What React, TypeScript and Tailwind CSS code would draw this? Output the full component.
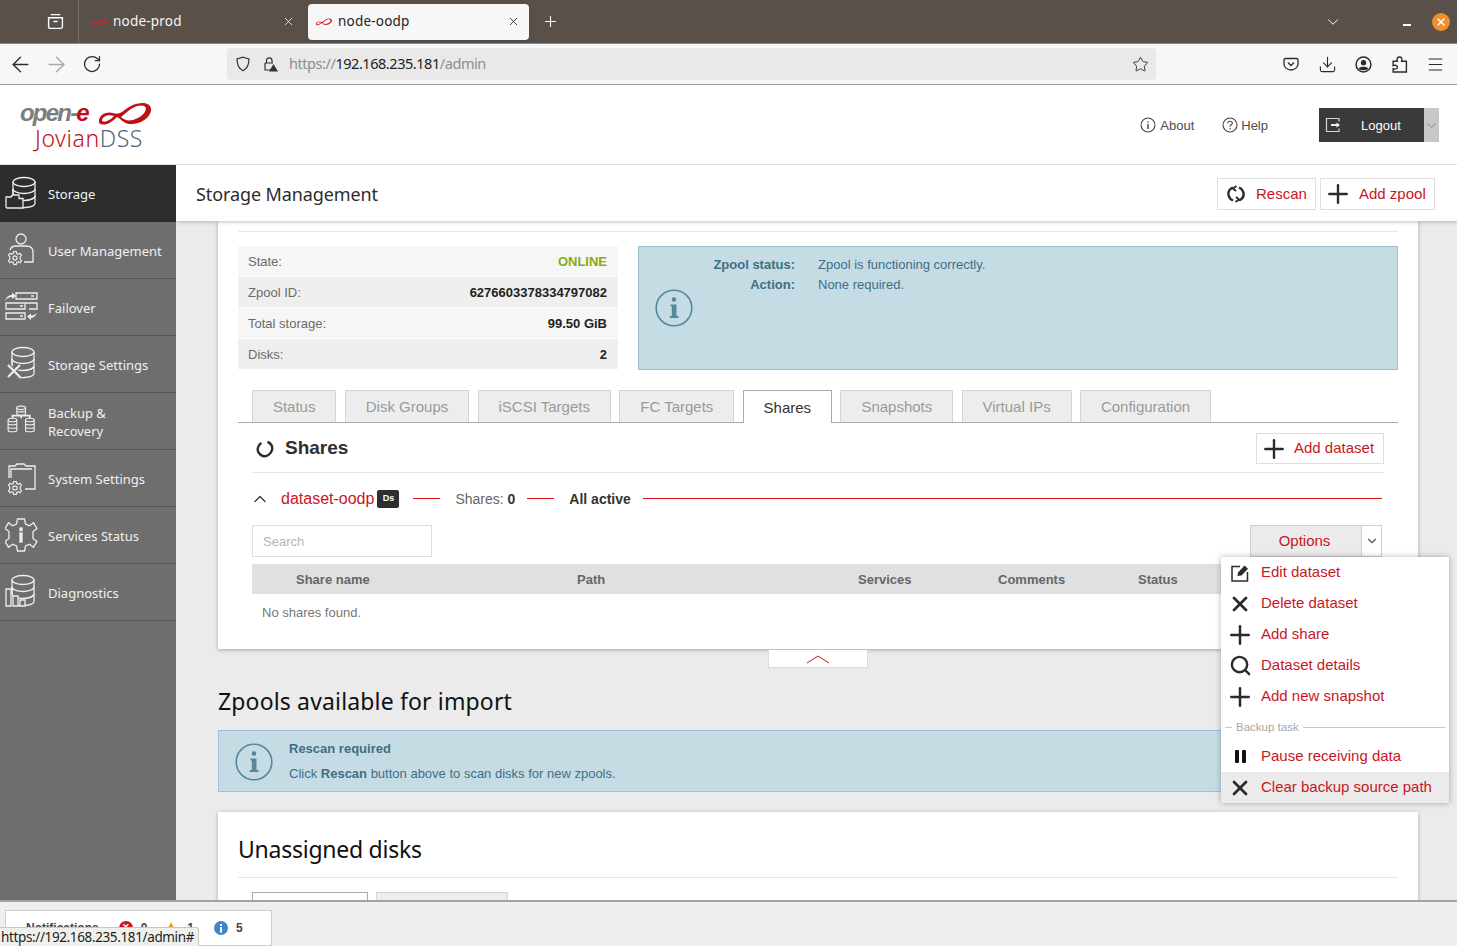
import type { ReactNode } from "react";
import {
  ArrowLeft,
  ArrowRight,
  ChevronDown,
  ChevronUp,
  Download,
  Menu,
  Plus,
  RotateCw,
  Search,
  Star,
  X,
} from "lucide-react";

const RED = "text-[#c9161f]";
const UI = "font-['Noto_Sans',sans-serif]";

function Swoosh({ className }: { className: string }) {
  return (
    <svg viewBox="0 0 52 22" className={className}>
      <path
        fillRule="evenodd"
        fill="currentColor"
        d="M0 17C1 11 8 8 14 10C20 12 23 9 27 6C32 2 38 0 43 0C49 0 53 3 52 8C50 16 40 22 30 21C24 20 22 16 18 14C14 18 10 21 6 21.500C2 22 -1 21 0 17ZM3 17C3 19 6 19 8 18C11 17 13 15 15 13C10 11 4 13 3 17ZM22 14C25 17 29 18 34 17C41 15 47 10 47 5C46 2 42 2 38 3C32 5 27 10 22 14Z"
      />
    </svg>
  );
}

function InfoCircle({ className }: { className: string }) {
  return (
    <svg viewBox="0 0 38 38" className={className} fill="none">
      <circle cx="19" cy="19" r="17.800" stroke="currentColor" strokeWidth="1.600" />
      <circle cx="19" cy="10.500" r="2.300" fill="currentColor" />
      <path
        fill="currentColor"
        d="M15.500 15.500H21.500V27H23.500V29H14.800V27H16.800V17.500H15.500Z"
      />
    </svg>
  );
}

function Gear({ x, y, s = 1 }: { x: number; y: number; s?: number }) {
  return (
    <g transform={`translate(${x} ${y}) scale(${s})`}>
      <path d="M-1.500 -7H1.500L2 -5L3.800 -4.200L5.600 -5.300L7.300 -3L5.800 -1.500V1.500L7.300 3L5.600 5.300L3.800 4.200L2 5L1.500 7H-1.500L-2 5L-3.800 4.200L-5.600 5.300L-7.300 3L-5.800 1.500V-1.500L-7.300 -3L-5.600 -5.300L-3.800 -4.200L-2 -5Z" />
      <circle r="2.400" />
    </g>
  );
}

function DbBody({ x = 0 }: { x?: number }) {
  return (
    <g transform={`translate(${x} 0)`}>
      <ellipse cx="22" cy="6" rx="11" ry="4.500" />
      <path d="M11 6V13C11 15.500 16 17.500 22 17.500S33 15.500 33 13V6" />
      <path d="M11 13V20C11 22.500 16 24.500 22 24.500S33 22.500 33 20V13" />
      <path d="M16 31C20 32 33 32 33 27V20M33 20C33 22 29 24 24 24.500" />
      <path d="M11 13V20" />
    </g>
  );
}

const svgBase = "h-[36px] w-[36px] shrink-0 fill-none stroke-[#ededed] stroke-[1.300]";

function StorageIcon() {
  return (
    <svg viewBox="0 0 36 36" className={svgBase}>
      <DbBody x={-3} />
      <path d="M1 31V21H6L7.500 19H14V22.500H18V32H2Z" fill="#2d2d2d" />
    </svg>
  );
}

function UserIcon() {
  return (
    <svg viewBox="0 0 36 36" className={svgBase}>
      <circle cx="16" cy="7" r="5" />
      <path d="M5 18C6 15 8 14 11 14H21C25 14 28 16 28 20V30H19" />
      <Gear x={10} y={26} s={0.9} />
    </svg>
  );
}

function FailoverIcon() {
  return (
    <svg viewBox="0 0 36 36" className={svgBase}>
      <g transform="translate(-2 0)">
        <path d="M13 4H34V10H13ZM28 7H31M3 14H22V20H3ZM17 17H20M22 14H34V20H26M3 24H22V30H3ZM17 27H20" />
        <path d="M2 12C3 8 6 6 9 6V3.500L13 7L9 10V8C6 8 4 9 2 12Z" fill="#ededed" stroke="none" />
        <path d="M34 24C33 27 30 29 28 29V31L24 27.500L28 24.500V26.500C30 26.500 32 26 34 24Z" fill="#ededed" stroke="none" />
      </g>
    </svg>
  );
}

function StorageSettingsIcon() {
  return (
    <svg viewBox="0 0 36 36" className={svgBase}>
      <DbBody x={-4} />
      <path d="M3 19L16 32M3 31L15 19" fill="none" stroke="#6e6e6f" strokeWidth="4.500" />
      <path d="M3 19L16 32M3 31L15 19" stroke="#ededed" strokeWidth="2.200" />
    </svg>
  );
}

function BackupIcon() {
  return (
    <svg viewBox="0 0 36 36" className={svgBase}>
      <g transform="translate(0.5 0.5) scale(0.87)">
        <ellipse cx="18" cy="5" rx="5" ry="2" />
        <path d="M13 5V12C13 14 23 14 23 12V5M13 8.500C13 10 23 10 23 8.500" />
        <path d="M8 17V14H28V17M18 13V17" strokeWidth="2" />
        <ellipse cx="8" cy="19" rx="5" ry="2" />
        <path d="M3 19V31C3 33 13 33 13 31V19M3 23C3 25 13 25 13 23M3 27C3 29 13 29 13 27" />
        <ellipse cx="28" cy="19" rx="5" ry="2" />
        <path d="M23 19V31C23 33 33 33 33 31V19M23 23C23 25 33 25 33 23M23 27C23 29 33 29 33 27" />
      </g>
    </svg>
  );
}

function SystemIcon() {
  return (
    <svg viewBox="0 0 36 36" className={svgBase}>
      <g transform="translate(-4 0)">
        <path d="M8 18V6H14L16 4H23L25 6H34V29H24" />
        <path d="M10 18V9H31" />
        <Gear x={14} y={28} s={0.9} />
      </g>
    </svg>
  );
}

function ServicesIcon() {
  return (
    <svg viewBox="0 0 36 36" className={svgBase}>
      <g transform="translate(-2 0)">
        <path d="M14.500 2H21.500L22.500 7L26.500 8.800L30.500 5.800L34 11.500L30 14.500V21.500L34 24.500L30.500 30.200L26.500 27.200L22.500 29L21.500 34H14.500L13.500 29L9.500 27.200L5.500 30.200L2 24.500L6 21.500V14.500L2 11.500L5.500 5.800L9.500 8.800L13.500 7Z" />
        <rect x="17" y="11" width="2" height="2.500" fill="#ededed" />
        <rect x="17" y="16" width="2" height="9" fill="#ededed" />
      </g>
    </svg>
  );
}

function DiagnosticsIcon() {
  return (
    <svg viewBox="0 0 36 36" className={svgBase}>
      <DbBody x={-4} />
      <path d="M1 15H6V32H1ZM8 22H13V32H8ZM15 26H20V32H15Z" fill="#6e6e6f" />
    </svg>
  );
}

function SideItem({
  icon,
  active,
  children,
}: {
  icon: ReactNode;
  active?: boolean;
  children: ReactNode;
}) {
  return (
    <div
      className={
        active
          ? "flex h-[57px] items-center gap-[7px] bg-[#2d2d2d] pl-[5px] text-[#f2f2f2]"
          : "flex h-[57px] items-center gap-[7px] border-b border-[#545454] pl-[5px] text-[#f0f0f0]"
      }
    >
      {icon}
      <span className="mt-[1px] text-[13px] leading-[18px]">{children}</span>
    </div>
  );
}

function OutlineButton({ icon, label, className }: { icon: ReactNode; label: string; className: string }) {
  return (
    <div className={`flex items-center border border-[#dedede] bg-white ${className}`}>
      {icon}
      <span className={RED}>{label}</span>
    </div>
  );
}

function BrowserTab({ name, active }: { name: string; active?: boolean }) {
  return (
    <div
      className={
        active
          ? "flex h-[36px] w-[221px] items-center rounded-[4px] bg-[#f7f7f7] pl-[8px] pr-[9px] text-[#222] shadow-sm"
          : "flex h-[36px] w-[229px] items-center pl-[12px] pr-[13px] text-[#f4f4f4]"
      }
    >
      <Swoosh className="h-[8px] w-[16px] text-[#d8232f]" />
      <span className="ml-[6px] -mt-[1px] text-[13.500px] tracking-[0.2px]">{name}</span>
      <X className="ml-auto h-[13px] w-[13px]" strokeWidth={1.5} />
    </div>
  );
}

function ToolCell({ children }: { children: ReactNode }) {
  return <div className="flex h-[36px] w-[36px] items-center justify-center text-[#2b2b2b]">{children}</div>;
}

function BrowserBar() {
  return (
    <>
      <div className={`flex h-[43px] shrink-0 items-center bg-[#5a504a] ${UI}`}>
        <div className="flex h-full w-[79px] items-center justify-end border-r border-[#7b716b] pr-[14px]">
          <svg viewBox="0 0 16 16" className="h-[17px] w-[17px] fill-none stroke-white stroke-[1.300]">
            <path d="M3.500 1.500H12.500M1.500 4.500H14.500V13C14.500 14 14 14.500 13 14.500H3C2 14.500 1.500 14 1.500 13ZM6 8H10" />
          </svg>
        </div>
        <BrowserTab name="node-prod" />
        <BrowserTab name="node-oodp" active />
        <Plus className="ml-[13px] h-[17px] w-[17px] text-white" strokeWidth={1.500} />
        <ChevronDown className="ml-auto h-[18px] w-[18px] text-white" strokeWidth={1.300} />
        <div className="ml-[61px] mt-[6px] h-[2px] w-[8px] bg-white" />
        <div className="ml-[21px] mr-[7px] flex h-[18px] w-[18px] items-center justify-center rounded-full bg-[#f18f2c]">
          <X className="h-[12px] w-[12px] text-white" strokeWidth={3} />
        </div>
      </div>
      <div className={`flex h-[42px] shrink-0 items-center border-t border-b border-t-[#8f8782] border-b-[#a09c98] bg-[#f7f7f7] pl-[2px] ${UI}`}>
        <ToolCell>
          <ArrowLeft className="h-[25px] w-[25px]" strokeWidth={1.300} />
        </ToolCell>
        <ToolCell>
          <ArrowRight className="h-[25px] w-[25px] text-[#a9a9a9]" strokeWidth={1.300} />
        </ToolCell>
        <ToolCell>
          <RotateCw className="h-[20px] w-[20px]" strokeWidth={1.500} />
        </ToolCell>
        <div className="ml-[117px] flex h-[32px] w-[929px] items-center rounded-[4px] bg-[#e9e9e9]">
          <svg viewBox="0 0 16 16" className="ml-[8px] h-[16px] w-[16px] fill-none stroke-[#333] stroke-[1.200]">
            <path d="M8 1.200L14 3C14 9 12.500 12.500 8 14.800C3.500 12.500 2 9 2 3Z" />
          </svg>
          <svg viewBox="0 0 16 16" className="ml-[11px] h-[16px] w-[16px] fill-none stroke-[#333] stroke-[1.200]">
            <path d="M3 7V14H9M4.500 7V4.500C4.500 1 10 1 10 4.500V7M3 7H11" />
            <path d="M11.500 8L16 15.500H7Z" fill="#333" stroke="none" />
          </svg>
          <span className="ml-[11px] -mt-[1px] text-[14.500px] tracking-[-0.45px] text-[#8a8f96]">
            https://<span className="text-[#222]">192.168.235.181</span>/admin
          </span>
          <Star className="ml-auto mr-[7px] h-[17px] w-[17px] text-[#2b2b2b]" strokeWidth={1.300} />
        </div>
        <div className="ml-auto mr-[4px] flex">
          <ToolCell>
            <svg viewBox="0 0 16 16" className="h-[16px] w-[16px] fill-none stroke-[#2b2b2b] stroke-[1.300]">
              <path d="M2.500 2.500H13.500C14.500 2.500 15 3 15 4V8C15 11 12 14 8 14S1 11 1 8V4C1 3 1.500 2.500 2.500 2.500Z" />
              <path d="M5 6.500L8 9.500L11 6.500" />
            </svg>
          </ToolCell>
          <ToolCell>
            <Download className="h-[19px] w-[19px]" strokeWidth={1.400} />
          </ToolCell>
          <ToolCell>
            <svg viewBox="0 0 16 16" className="h-[17px] w-[17px]">
              <circle cx="8" cy="8" r="7" fill="none" stroke="currentColor" strokeWidth="1.400" />
              <circle cx="8" cy="6.300" r="2.500" fill="currentColor" />
              <path d="M3.500 12C4.500 9.500 11.500 9.500 12.500 12C10 14 6 14 3.500 12Z" fill="currentColor" />
            </svg>
          </ToolCell>
          <ToolCell>
            <svg viewBox="0 0 16 16" className="h-[17px] w-[17px] fill-none stroke-[#2b2b2b] stroke-[1.300]">
              <path d="M2 5H6C5 2 6.500 1 8 1S11 2 10 5H14.500V15H2V12C5 13 6 11.500 6 10.500S5 8 2 9Z" />
            </svg>
          </ToolCell>
          <ToolCell>
            <Menu className="h-[19px] w-[19px]" strokeWidth={1.400} />
          </ToolCell>
        </div>
      </div>
    </>
  );
}

function Logo() {
  return (
    <div className="w-[176px] pl-[20px] pt-[14px]">
      <div className="flex h-[27px] items-start">
        <span className="font-['Liberation_Sans',sans-serif] text-[24px] leading-[27px] font-bold italic tracking-[-1.800px] text-[#7d7d7d]">
          open-<span className="text-[#c00f14]">e</span>
        </span>
        <Swoosh className="ml-[11px] mt-[4px] h-[22px] w-[52px] text-[#c00f14]" />
      </div>
      <div className={`ml-[15px] text-[23px] leading-[25px] font-light tracking-[0.6px] text-[#c00f14] ${UI}`}>
        Jovian<span className="text-[#54697a]">DSS</span>
      </div>
    </div>
  );
}

function AppHeader() {
  return (
    <div className="flex h-[80px] shrink-0 items-start border-b border-[#dfdfdf] bg-white">
      <Logo />
      <div className="ml-auto mr-[18px] mt-[23px] flex h-[34px] items-center text-[13px] text-[#4d4d4d]">
        <svg viewBox="0 0 16 16" className="h-[16px] w-[16px] fill-none stroke-[#444] stroke-[1.100]">
          <circle cx="8" cy="8" r="7" />
          <path d="M8 7V12M8 4.500V5.800" strokeWidth="1.400" />
        </svg>
        <span className="ml-[4px] mt-[1px]">About</span>
        <svg viewBox="0 0 16 16" className="ml-[28px] h-[16px] w-[16px] fill-none stroke-[#444] stroke-[1.100]">
          <circle cx="8" cy="8" r="7" />
          <path d="M5.800 6.200C5.800 3.600 10.300 3.600 10.300 6.200C10.300 7.800 8 7.800 8 9.800M8 11V12.400" />
        </svg>
        <span className="ml-[3px] mt-[1px]">Help</span>
        <div className="ml-[51px] flex h-[34px] w-[105px] items-center bg-[#3a3a3a] text-white">
          <svg viewBox="0 0 16 16" className="ml-[6px] h-[16px] w-[16px] fill-none stroke-[#d5d5d5] stroke-[1.200]">
            <path d="M14 4.500V1.500H1.500V14.500H14V11.500" />
            <path d="M6 8H12" strokeWidth="1.800" stroke="#fff" />
            <path d="M11.500 5.500L15 8L11.500 10.500Z" fill="#fff" stroke="none" />
          </svg>
          <span className="ml-[20px] mt-[1px]">Logout</span>
        </div>
        <div className="flex h-[34px] w-[15px] items-center justify-center bg-[#c8c8c8]">
          <ChevronDown className="h-[15px] w-[15px] text-[#777]" strokeWidth={1.300} />
        </div>
      </div>
    </div>
  );
}

function Sidebar() {
  return (
    <div className={`flex w-[176px] shrink-0 flex-col bg-[#6e6e6f] ${UI}`}>
      <SideItem active icon={<StorageIcon />}>Storage</SideItem>
      <SideItem icon={<UserIcon />}>User Management</SideItem>
      <SideItem icon={<FailoverIcon />}>Failover</SideItem>
      <SideItem icon={<StorageSettingsIcon />}>Storage Settings</SideItem>
      <SideItem icon={<BackupIcon />}>
        Backup &amp;
        <br />
        Recovery
      </SideItem>
      <SideItem icon={<SystemIcon />}>System Settings</SideItem>
      <SideItem icon={<ServicesIcon />}>Services Status</SideItem>
      <SideItem icon={<DiagnosticsIcon />}>Diagnostics</SideItem>
    </div>
  );
}

function RefreshIcon() {
  return (
    <svg viewBox="0 0 18 18" className="h-[18px] w-[18px] fill-none stroke-[#2a2a2a] stroke-[2.400]">
      <path d="M6 2.500C2.500 4 1 7 1.500 10C2 12.500 3.500 14.500 6 15.500M12 15.500C15.500 14 17 11 16.500 8C16 5.500 14.500 3.500 12 2.500" />
      <path d="M9.500 1L6 3.500L9 6M8.500 17L12 14.500L9 12" strokeWidth="1.800" />
    </svg>
  );
}

const statRows = [
  ["State:", "ONLINE", "bg-[#f6f6f6]"],
  ["Zpool ID:", "6276603378334797082", "bg-[#efefef]"],
  ["Total storage:", "99.50 GiB", "bg-[#f6f6f6]"],
  ["Disks:", "2", "bg-[#efefef]"],
];

function ZpoolSummary() {
  return (
    <div className="mt-[14px] flex gap-[20px] text-[13px]">
      <div className="flex w-[380px] flex-col gap-[1px]">
        {statRows.map(([label, value, bg]) => (
          <div key={label} className={`flex h-[30px] items-center justify-between pl-[10px] pr-[11px] pt-[2px] ${bg}`}>
            <span className="text-[#6a6a6a]">{label}</span>
            <span className={value === "ONLINE" ? "font-bold text-[#8cab0c]" : "font-bold text-[#222]"}>{value}</span>
          </div>
        ))}
      </div>
      <div className="flex h-[124px] flex-1 items-start border border-[#9cc1d3] bg-[#c6dce5] text-[#3d6f85]">
        <InfoCircle className="ml-[16px] mt-[42px] h-[38px] w-[38px] text-[#58879c]" />
        <div className="mt-[8px] grid grid-cols-[102px_auto] gap-x-[23px] gap-y-[1px] leading-[19px]">
          <span className="text-right font-bold">Zpool status:</span>
          <span>Zpool is functioning correctly.</span>
          <span className="text-right font-bold">Action:</span>
          <span>None required.</span>
        </div>
      </div>
    </div>
  );
}

const tabs = ["Status", "Disk Groups", "iSCSI Targets", "FC Targets", "Shares", "Snapshots", "Virtual IPs", "Configuration"];

function PoolTabs() {
  return (
    <div className="mt-[20px] flex h-[33px] gap-[8.400px] border-b border-[#ababab] pl-[14px] text-[15px]">
      {tabs.map((t) =>
        t === "Shares" ? (
          <div key={t} className="-mb-px flex h-[33px] items-center border border-b-0 border-[#ababab] bg-white px-[19.950px] pt-[2px] text-[#333]">
            {t}
          </div>
        ) : (
          <div key={t} className="flex h-[32px] items-center border border-b-0 border-[#d4d4d4] bg-[#ededed] px-[19.950px] pt-[2px] text-[#9a9a9a]">
            {t}
          </div>
        ),
      )}
    </div>
  );
}

const menuItems = [
  { label: "Edit dataset", icon: "edit" },
  { label: "Delete dataset", icon: "x" },
  { label: "Add share", icon: "plus" },
  { label: "Dataset details", icon: "search" },
  { label: "Add new snapshot", icon: "plus" },
];

function MenuIcon({ name }: { name: string }) {
  if (name === "edit")
    return (
      <svg viewBox="0 0 18 18" className="h-[18px] w-[18px] fill-none stroke-[#2b2b2b] stroke-[1.500]">
        <path d="M9 2.500H1V17H16.500V8" />
        <path d="M6.500 12L7 8.500L13.500 1.500L17 4.800L10.500 11.500Z" fill="#2b2b2b" stroke="none" />
      </svg>
    );
  if (name === "x") return <X className="h-[24px] w-[24px] text-[#2b2b2b]" strokeWidth={2.800} />;
  if (name === "plus") return <Plus className="h-[30px] w-[30px] text-[#2b2b2b]" strokeWidth={2} />;
  if (name === "search") return <Search className="h-[23px] w-[23px] text-[#2b2b2b]" strokeWidth={2.500} />;
  return (
    <svg viewBox="0 0 11 13" className="h-[13px] w-[11px] fill-[#111]">
      <rect width="4" height="13" rx="1" />
      <rect x="7" width="4" height="13" rx="1" />
    </svg>
  );
}

function MenuRow({ label, icon, hover }: { label: string; icon: string; hover?: boolean }) {
  return (
    <div className={`flex h-[31px] items-center ${hover ? "bg-[#ebebeb]" : ""}`}>
      <div className="flex w-[40px] justify-center pr-[2px]">
        <MenuIcon name={icon} />
      </div>
      <span className={RED}>{label}</span>
    </div>
  );
}

function OptionsMenu() {
  return (
    <div className="relative mr-[2px] flex h-[32px] w-[132px] text-[15px]">
      <div className={`flex h-[32px] w-[112px] items-center justify-center border border-[#cfcfcf] bg-[#ebebeb] pr-[3px] ${RED}`}>Options</div>
      <div className="flex h-[32px] w-[20px] items-center justify-center border border-l-0 border-[#cfcfcf] bg-white">
        <ChevronDown className="h-[14px] w-[14px] text-[#555]" strokeWidth={2} />
      </div>
      <div className="absolute left-[-29px] top-[32px] z-20 w-[228px] bg-white shadow-[0_0_6px_rgba(0,0,0,0.3)]">
        {menuItems.map((m) => (
          <MenuRow key={m.label} label={m.label} icon={m.icon} />
        ))}
        <div className="flex h-[29px] items-center pl-[4px] pr-[4px] pt-[2px] text-[11.500px] text-[#a6a6a6]">
          <div className="h-px w-[7px] bg-[#c8c8c8]" />
          <span className="mx-[4px]">Backup task</span>
          <div className="h-px flex-1 bg-[#c8c8c8]" />
        </div>
        <MenuRow label="Pause receiving data" icon="pause" />
        <MenuRow label="Clear backup source path" icon="x" hover />
      </div>
    </div>
  );
}

function RedRule({ className }: { className: string }) {
  return <div className={`-mt-[2px] border-t border-[#d8141c] ${className}`} />;
}

function SharesPanel() {
  return (
    <div className="px-[14px] pb-[19px]">
      <div className="flex h-[50px] items-center border-b border-[#e6e6e6] pt-[2px]">
        <svg viewBox="0 0 18 18" className="ml-[4px] h-[18px] w-[18px] fill-none stroke-[#2b2b2b] stroke-[2.400]">
          <path d="M11.500 2C15 3 17 6.500 16 10C15 14 11 17 7 16C3 15 1 11 2 7.500C2.500 5.500 3.500 4 5.500 3" />
        </svg>
        <span className="ml-[11px] text-[19px] font-bold text-[#2f2f2f]">Shares</span>
        <OutlineButton
          className="ml-auto h-[31px] w-[128px] pl-[2px] text-[15px]"
          icon={<Plus className="mr-[5px] h-[30px] w-[30px] text-[#2b2b2b]" strokeWidth={1.900} />}
          label="Add dataset"
        />
      </div>
      <div className="flex h-[52px] items-center pr-[2px]">
        <ChevronUp className="-ml-[2px] h-[20px] w-[20px] text-[#333]" strokeWidth={1.500} />
        <span className={`ml-[11px] text-[16px] ${RED}`}>dataset-oodp</span>
        <span className="ml-[3px] flex h-[18px] w-[22px] items-center justify-center rounded-[2px] bg-[#2f2f2f] text-[9px] font-bold text-white">Ds</span>
        <RedRule className="ml-[14px] w-[27px]" />
        <span className="ml-[15px] text-[14px] text-[#666]">
          Shares: <b className="text-[#333]">0</b>
        </span>
        <RedRule className="ml-[12px] w-[27px]" />
        <span className="ml-[15px] text-[14px] font-bold text-[#333]">All active</span>
        <RedRule className="ml-[12px] flex-1" />
      </div>
      <div className="flex items-center justify-between">
        <div className="flex h-[32px] w-[180px] items-center border border-[#dedede] pl-[10px] pt-[2px] text-[13px] text-[#b5b5b5]">Search</div>
        <OptionsMenu />
      </div>
      <div className="mt-[7px] grid h-[30px] grid-cols-[281px_281px_140px_140px_1fr] items-center bg-[#e0e0e0] pl-[44px] pt-[2px] text-[13px] font-bold text-[#666]">
        <span>Share name</span>
        <span>Path</span>
        <span>Services</span>
        <span>Comments</span>
        <span>Status</span>
      </div>
      <div className="flex h-[36px] items-center pl-[10px] pt-[2px] text-[13px] text-[#777]">No shares found.</div>
    </div>
  );
}

function MainArea() {
  return (
    <div className="relative flex min-w-0 flex-1 flex-col overflow-hidden bg-[#ebebeb]">
      <div className="relative z-10 flex h-[56px] shrink-0 items-center bg-white pl-[20px] pr-[22px] pt-[2px] shadow-[0_1px_4px_rgba(0,0,0,0.25)]">
        <span className={`text-[18px] tracking-[-0.1px] text-[#2c2c2c] ${UI}`}>Storage Management</span>
        <OutlineButton
          className="ml-auto h-[32px] w-[99px] pl-[9px] text-[15px]"
          icon={<div className="mr-[11px]"><RefreshIcon /></div>}
          label="Rescan"
        />
        <OutlineButton
          className="ml-[4px] h-[32px] w-[115px] pl-[2px] text-[15px]"
          icon={<Plus className="mr-[6px] h-[30px] w-[30px] text-[#2b2b2b]" strokeWidth={1.900} />}
          label="Add zpool"
        />
      </div>
      <div className="flex flex-col px-[42px] font-['Liberation_Sans',sans-serif]">
        <div className="w-[1200px] bg-white px-[20px] pt-[10px] shadow-[0_1px_4px_rgba(0,0,0,0.3)]">
          <div className="border-t border-[#e6e6e6]" />
          <ZpoolSummary />
          <PoolTabs />
          <SharesPanel />
        </div>
        <div className="ml-[550px] mt-px flex h-[18px] w-[100px] items-center justify-center border-b border-x border-[#dcdcdc] bg-white">
          <svg viewBox="0 0 24 10" className="h-[10px] w-[24px] fill-none stroke-[#c9161f] stroke-[1]">
            <path d="M1 9L12 2L23 9" />
          </svg>
        </div>
        <div className={`mt-[17px] h-[32px] text-[23px] leading-[32px] tracking-[0.15px] text-[#111] ${UI}`}>
          Zpools available for import
        </div>
        <div className="mt-[13px] flex h-[62px] w-[1200px] border border-[#9cc1d3] bg-[#c6dce5] text-[13px] text-[#3d6f85]">
          <InfoCircle className="ml-[16px] mt-[12px] h-[38px] w-[38px] text-[#58879c]" />
          <div className="ml-[16px] mt-[9px]">
            <div className="font-bold leading-[17px]">Rescan required</div>
            <div className="mt-[8px] leading-[17px]">
              Click <b>Rescan</b> button above to scan disks for new zpools.
            </div>
          </div>
        </div>
        <div className="mt-[20px] h-[200px] w-[1200px] bg-white px-[20px] shadow-[0_1px_4px_rgba(0,0,0,0.3)]">
          <div className={`flex h-[66px] items-end border-b border-[#e6e6e6] pb-[12px] text-[23px] leading-[32px] tracking-[-0.25px] text-[#111] ${UI}`}>
            Unassigned disks
          </div>
          <div className="mt-[14px] flex gap-[8px] pl-[14px]">
            <div className="h-[40px] w-[116px] border border-[#ababab] bg-white" />
            <div className="h-[40px] w-[132px] border border-[#d4d4d4] bg-[#ededed]" />
          </div>
        </div>
      </div>
    </div>
  );
}

function Footer() {
  return (
    <div className="relative flex h-[46px] shrink-0 items-end border-t-2 border-[#a3a3a3] bg-[#efefef] pl-[5px] font-['Liberation_Sans',sans-serif]">
      <div className="flex h-[36px] w-[267px] items-center border border-[#cdcdcd] bg-white pl-[20px] text-[12px] font-bold text-[#444]">
        <span>Notifications</span>
        <span className="ml-[20px] flex h-[14px] w-[14px] items-center justify-center rounded-full bg-[#c9161f] text-[9px] text-white">✕</span>
        <span className="ml-[8px]">0</span>
        <svg viewBox="0 0 14 14" className="ml-[17px] h-[14px] w-[14px]">
          <path d="M7 1L13 13H1Z" fill="#ef9b24" />
        </svg>
        <span className="ml-[9px]">1</span>
        <svg viewBox="0 0 14 14" className="ml-[20px] h-[14px] w-[14px]">
          <circle cx="7" cy="7" r="7" fill="#3f87c9" />
          <rect x="6" y="6" width="2" height="5.500" fill="#fff" />
          <rect x="6" y="3" width="2" height="2" fill="#fff" />
        </svg>
        <span className="ml-[8px]">5</span>
      </div>
      <div className={`absolute bottom-0 left-0 flex h-[19px] w-[199px] items-center rounded-tr-[3px] border-t border-r border-[#c9c9c4] bg-[#f0f0ec] pl-[1px] text-[13.500px] tracking-[-0.37px] text-[#222] ${UI}`}>
        https://192.168.235.181/admin#
      </div>
    </div>
  );
}

export default function App() {
  return (
    <div className="flex h-[946px] w-[1457px] flex-col overflow-hidden bg-white font-['Liberation_Sans',sans-serif]">
      <BrowserBar />
      <AppHeader />
      <div className="flex min-h-0 flex-1">
        <Sidebar />
        <MainArea />
      </div>
      <Footer />
    </div>
  );
}
